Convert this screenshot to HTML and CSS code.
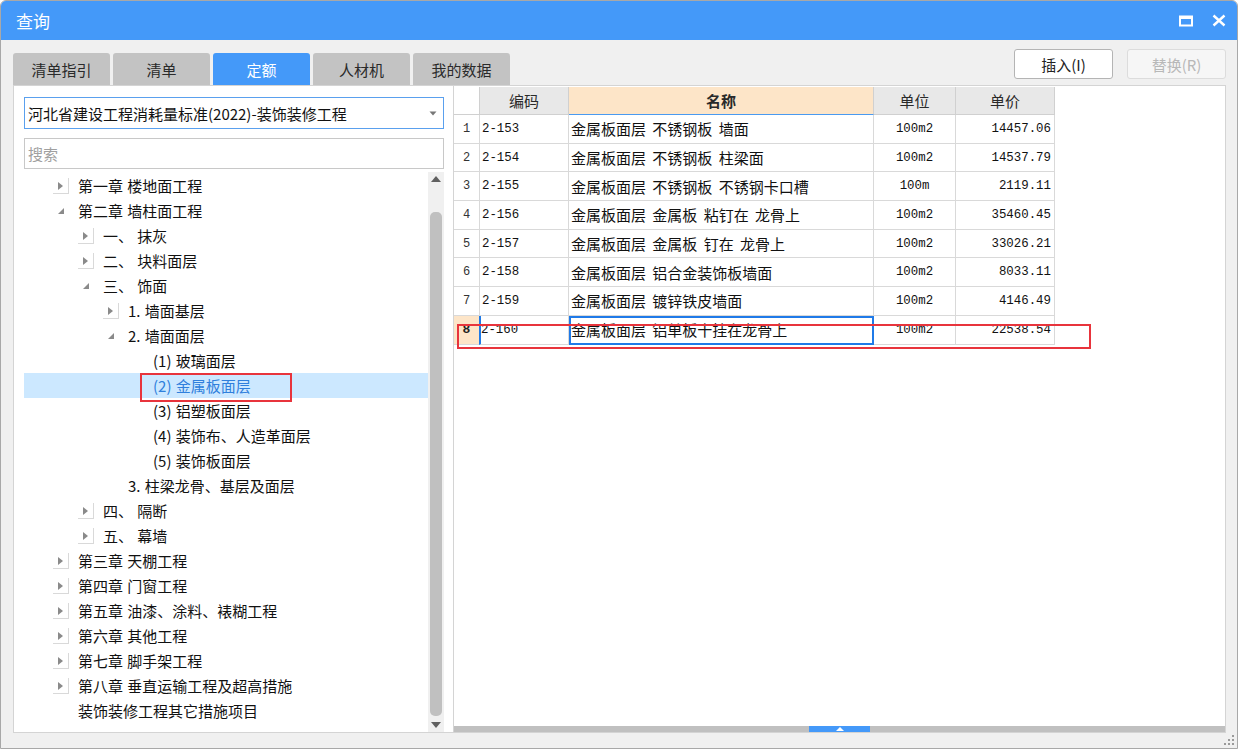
FILE: index.html
```html
<!DOCTYPE html>
<html lang="zh-CN">
<head>
<meta charset="utf-8">
<title>查询</title>
<link rel="stylesheet" href="styles.css">
</head>
<body>
<div class="window">
  <div class="titlebar">
    <span class="title">查询</span>
    <div class="win-btns">
      <svg class="wbtn" width="14" height="12" viewBox="0 0 14 12"><rect x="1" y="1.5" width="12" height="9" fill="none" stroke="#fff" stroke-width="2"/><rect x="1" y="1" width="12" height="3" fill="#fff"/></svg>
      <svg class="wbtn" width="14" height="13" viewBox="0 0 14 13"><path d="M1.5 1.5 L12.5 11.5 M12.5 1.5 L1.5 11.5" stroke="#fff" stroke-width="2.4"/></svg>
    </div>
  </div>
  <div class="body">
    <div class="topbar">
      <div class="tabs">
        <div class="tab">清单指引</div>
        <div class="tab">清单</div>
        <div class="tab active">定额</div>
        <div class="tab">人材机</div>
        <div class="tab">我的数据</div>
      </div>
      <div class="actions">
        <button class="btn">插入(I)</button>
        <button class="btn disabled">替换(R)</button>
      </div>
    </div>
    <div class="main">
      <div class="left">
        <div class="select">
          <span>河北省建设工程消耗量标准(2022)-装饰装修工程</span>
          <svg width="8" height="5" viewBox="0 0 8 5"><path d="M0.5 0.5 L7.5 0.5 L4 4.5 Z" fill="#777"/></svg>
        </div>
        <div class="search">搜索</div>
        <div class="treewrap">
          <div class="tree">
            <div class="node l0"><span class="arr c"></span>第一章 楼地面工程</div>
            <div class="node l0"><span class="arr e"></span>第二章 墙柱面工程</div>
            <div class="node l1"><span class="arr c"></span>一、 抹灰</div>
            <div class="node l1"><span class="arr c"></span>二、 块料面层</div>
            <div class="node l1"><span class="arr e"></span>三、 饰面</div>
            <div class="node l2"><span class="arr c"></span>1. 墙面基层</div>
            <div class="node l2"><span class="arr e"></span>2. 墙面面层</div>
            <div class="node l3"><span class="arr"></span>(1) 玻璃面层</div>
            <div class="node l3 sel"><span class="arr"></span>(2) 金属板面层</div>
            <div class="node l3"><span class="arr"></span>(3) 铝塑板面层</div>
            <div class="node l3"><span class="arr"></span>(4) 装饰布、人造革面层</div>
            <div class="node l3"><span class="arr"></span>(5) 装饰板面层</div>
            <div class="node l2"><span class="arr"></span>3. 柱梁龙骨、基层及面层</div>
            <div class="node l1"><span class="arr c"></span>四、 隔断</div>
            <div class="node l1"><span class="arr c"></span>五、 幕墙</div>
            <div class="node l0"><span class="arr c"></span>第三章 天棚工程</div>
            <div class="node l0"><span class="arr c"></span>第四章 门窗工程</div>
            <div class="node l0"><span class="arr c"></span>第五章 油漆、涂料、裱糊工程</div>
            <div class="node l0"><span class="arr c"></span>第六章 其他工程</div>
            <div class="node l0"><span class="arr c"></span>第七章 脚手架工程</div>
            <div class="node l0"><span class="arr c"></span>第八章 垂直运输工程及超高措施</div>
            <div class="node l0"><span class="arr"></span>装饰装修工程其它措施项目</div>
          </div>
          <div class="vscroll">
            <svg width="10" height="6" viewBox="0 0 10 6"><path d="M0 6 L5 0 L10 6 Z" fill="#606060"/></svg>
            <div class="vtrack"><div class="vthumb"></div></div>
            <svg width="10" height="6" viewBox="0 0 10 6"><path d="M0 0 L10 0 L5 6 Z" fill="#606060"/></svg>
          </div>
        </div>
        <div class="mark mark-tree"></div>
      </div>
      <div class="gridpanel">
        <div class="grid">
          <div class="row head">
            <div class="c num"></div>
            <div class="c">编码</div>
            <div class="c name-h">名称</div>
            <div class="c">单位</div>
            <div class="c">单价</div>
          </div>
          <div class="row"><div class="c num">1</div><div class="c code">2-153</div><div class="c name">金属板面层 不锈钢板 墙面</div><div class="c unit">100m2</div><div class="c price">14457.06</div></div>
          <div class="row"><div class="c num">2</div><div class="c code">2-154</div><div class="c name">金属板面层 不锈钢板 柱梁面</div><div class="c unit">100m2</div><div class="c price">14537.79</div></div>
          <div class="row"><div class="c num">3</div><div class="c code">2-155</div><div class="c name">金属板面层 不锈钢板 不锈钢卡口槽</div><div class="c unit">100m</div><div class="c price">2119.11</div></div>
          <div class="row"><div class="c num">4</div><div class="c code">2-156</div><div class="c name">金属板面层 金属板 粘钉在 龙骨上</div><div class="c unit">100m2</div><div class="c price">35460.45</div></div>
          <div class="row"><div class="c num">5</div><div class="c code">2-157</div><div class="c name">金属板面层 金属板 钉在 龙骨上</div><div class="c unit">100m2</div><div class="c price">33026.21</div></div>
          <div class="row"><div class="c num">6</div><div class="c code">2-158</div><div class="c name">金属板面层 铝合金装饰板墙面</div><div class="c unit">100m2</div><div class="c price">8033.11</div></div>
          <div class="row"><div class="c num">7</div><div class="c code">2-159</div><div class="c name">金属板面层 镀锌铁皮墙面</div><div class="c unit">100m2</div><div class="c price">4146.49</div></div>
          <div class="row cur"><div class="c num">8</div><div class="c code">2-160</div><div class="c name">金属板面层 铝单板十挂在龙骨上</div><div class="c unit">100m2</div><div class="c price">22538.54</div></div>
        </div>
        <div class="hscroll"><div class="hhandle"><svg width="8" height="4" viewBox="0 0 8 4"><path d="M0 4 L4 0 L8 4 Z" fill="#fff"/></svg></div></div>
        <div class="mark mark-grid"></div>
      </div>
    </div>
    <svg class="grip" width="12" height="12" viewBox="0 0 12 12"><g fill="#9a9a9a"><rect x="9" y="1" width="2" height="2"/><rect x="5" y="5" width="2" height="2"/><rect x="9" y="5" width="2" height="2"/><rect x="1" y="9" width="2" height="2"/><rect x="5" y="9" width="2" height="2"/><rect x="9" y="9" width="2" height="2"/></g></svg>
  </div>
</div>
</body>
</html>
```
FILE: styles.css
```css
* { box-sizing: border-box; }
html, body { margin: 0; padding: 0; background: #ffffff; }
body {
  font-family: "Noto Sans CJK SC", "Noto Sans", sans-serif;
  font-size: 15px;
  color: #111;
}
.window {
  width: 1238px;
  height: 749px;
  border: 1px solid #a8a8a8;
  border-radius: 6px 6px 0 0;
  overflow: hidden;
  display: flex;
  flex-direction: column;
  background: #f0f0f0;
}
.titlebar {
  height: 39px;
  background: #4499f9;
  display: flex;
  align-items: center;
  justify-content: space-between;
  padding: 0 11px 0 15px;
  flex: none;
}
.title { color: #fff; font-size: 17px; line-height: 20px; }
.win-btns { display: flex; gap: 19px; align-items: center; }
.wbtn { display: block; }
.body {
  flex: 1;
  position: relative;
  padding: 0 11px 0 12px;
  display: flex;
  flex-direction: column;
}
.topbar {
  display: flex;
  justify-content: space-between;
  align-items: flex-start;
  padding-top: 9px;
  height: 45px;
  flex: none;
}
.tabs { display: flex; gap: 3px; margin-top: 4px; }
.tab {
  width: 97px;
  height: 32px;
  background: #c3c3c3;
  color: #2a2a2a;
  border-radius: 3px 3px 0 0;
  display: flex;
  align-items: center;
  justify-content: center;
  font-size: 15px;
}
.tab.active { background: #4499f9; color: #fff; }
.actions { display: flex; gap: 14px; }
.btn {
  width: 99px;
  height: 30px;
  background: #fff;
  border: 1px solid #b4b4b4;
  border-radius: 3px;
  font-family: inherit;
  font-size: 15px;
  color: #222;
  padding: 0;
}
.btn.disabled { background: #f6f6f6; border-color: #dcdcdc; color: #b8b8b8; }
.main {
  display: flex;
  height: 648px;
  flex: none;
}
.left {
  position: relative;
  width: 440px;
  background: #fff;
  border: 1px solid #d4d4d4;
  border-right: none;
  padding: 11px 9px 0 10px;
  display: flex;
  flex-direction: column;
}
.select {
  height: 32px;
  border: 1px solid #5aa0ee;
  display: flex;
  align-items: center;
  justify-content: space-between;
  padding: 0 6px 0 3px;
  font-size: 15px;
  color: #111;
  flex: none;
}
.search {
  margin-top: 9px;
  height: 31px;
  border: 1px solid #c8c8c8;
  color: #a0a0a0;
  padding: 0 3px;
  display: flex;
  align-items: center;
  font-size: 15px;
  flex: none;
}
.treewrap {
  flex: 1;
  display: flex;
  margin-top: 3px;
  min-height: 0;
}
.tree { flex: 1; padding-top: 1px; }
.node {
  height: 25px;
  display: flex;
  align-items: center;
  color: #111;
  white-space: nowrap;
  font-size: 15px;
  word-spacing: 1px;
}
.node.l0 { padding-left: 29px; }
.node.l1 { padding-left: 54px; }
.node.l2 { padding-left: 79px; }
.node.l3 { padding-left: 104px; }
.node.sel { background: #cce8ff; color: #2f7fdc; }
.arr {
  width: 16px;
  height: 16px;
  margin-right: 9px;
  position: relative;
  flex: none;
}
.arr.c::before {
  content: "";
  position: absolute;
  left: 5px;
  top: 4px;
  border-left: 5px solid #8a8a8a;
  border-top: 4px solid transparent;
  border-bottom: 4px solid transparent;
}
.arr.e::before {
  content: "";
  position: absolute;
  left: 5px;
  top: 5px;
  border-bottom: 6px solid #8a8a8a;
  border-left: 6px solid transparent;
}
.vscroll {
  width: 16px;
  background: #f0f0f0;
  display: flex;
  flex-direction: column;
  align-items: center;
  padding: 4px 0 4px;
}
.vscroll svg { flex: none; display: block; }
.vtrack { flex: 1; width: 100%; padding: 30px 2px 6px 2px; }
.vthumb { height: 100%; background: #c0c0c0; border-radius: 5px; }
.gridpanel {
  position: relative;
  flex: 1;
  background: #fff;
  border: 1px solid #d4d4d4;
  display: flex;
  flex-direction: column;
  padding-top: 1px;
}
.grid { flex: 1; }
.row {
  display: grid;
  grid-template-columns: 26px 89px 305px 82px 99px;
  height: 28.7px;
}
.c {
  border-right: 1px solid #d9d9d9;
  border-bottom: 1px solid #d9d9d9;
  display: flex;
  align-items: center;
  white-space: nowrap;
  overflow: hidden;
  color: #111;
}
.head .c {
  background: #e8e8e8;
  justify-content: center;
  font-size: 15px;
  color: #2a2a2a;
  border-color: #d0d0d0;
}
.head { height: 28px; }
.head .c.name-h { background: #fde5c8; border-bottom: 1px solid #4a9af0; font-weight: bold; color: #2a2a2a; }
.c.num {
  justify-content: center;
  font-family: "Liberation Mono", monospace;
  font-size: 12px;
  color: #333;
  background: #fff;
}
.c.code { font-family: "Liberation Mono", monospace; font-size: 12.4px; padding-left: 2px; }
.c.name { padding-left: 2px; font-size: 15px; word-spacing: 3px; }
.c.unit { justify-content: center; font-family: "Liberation Mono", monospace; font-size: 12.4px; }
.c.price { justify-content: flex-end; padding-right: 3px; font-family: "Liberation Mono", monospace; font-size: 12.4px; }
.row.cur .c.num { background: #fde5c8; font-weight: bold; color: #222; font-size: 13px; }
.row.cur .c.code { border-left: 2px solid #1f7ae8; padding-left: 0; margin-left: -1px; }
.row.cur .c.name { outline: 2px solid #1f7ae8; outline-offset: -2px; }
.hscroll {
  height: 6px;
  background: #c0c0c0;
  position: relative;
  flex: none;
}
.hhandle {
  position: absolute;
  left: 355px;
  top: 0;
  width: 61px;
  height: 6px;
  background: #4499f9;
  display: flex;
  align-items: center;
  justify-content: center;
}
.hhandle svg { display: block; }
.mark {
  position: absolute;
  border: 2px solid #e8343c;
  pointer-events: none;
}
.mark-tree { left: 126px; top: 287px; width: 152px; height: 29px; }
.mark-grid { left: 3px; top: 238px; width: 634px; height: 25px; }
.grip { position: absolute; right: 2px; bottom: 2px; }
```
